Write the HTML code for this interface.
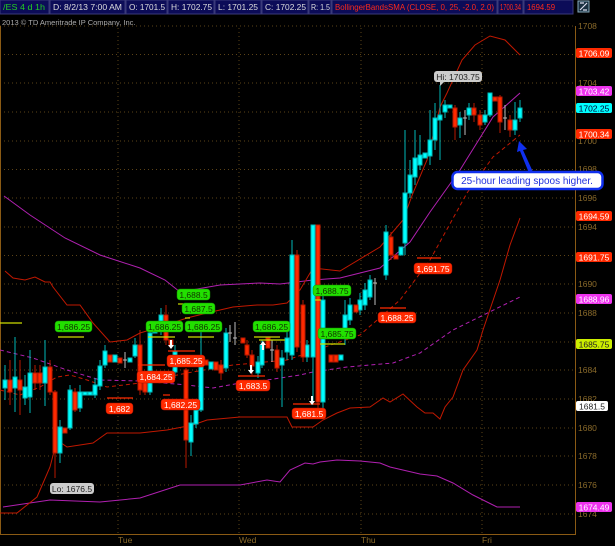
<!DOCTYPE html>
<html><head><meta charset="utf-8"><style>
html,body{margin:0;padding:0;background:#000;width:615px;height:546px;overflow:hidden}
svg{display:block;font-family:"Liberation Sans",sans-serif}
</style></head><body>
<svg width="615" height="546" viewBox="0 0 615 546">
<rect width="615" height="546" fill="#000"/>
<!-- header -->
<g font-size="8">
<rect x="0" y="0" width="49" height="14" fill="#0c0c58" stroke="#3a3a7a"/>
<text x="3" y="10" fill="#22cc22" textLength="42" lengthAdjust="spacingAndGlyphs">/ES 4 d 1h</text>
<rect x="50" y="0" width="75" height="14" fill="#0c0c58" stroke="#3a3a7a"/>
<text x="53" y="10" fill="#ddd" textLength="69" lengthAdjust="spacingAndGlyphs">D: 8/2/13 7:00 AM</text>
<rect x="126" y="0" width="41" height="14" fill="#0c0c58" stroke="#3a3a7a"/>
<text x="129" y="10" fill="#ddd" textLength="36" lengthAdjust="spacingAndGlyphs">O: 1701.5</text>
<rect x="168" y="0" width="46" height="14" fill="#0c0c58" stroke="#3a3a7a"/>
<text x="171" y="10" fill="#ddd" textLength="41" lengthAdjust="spacingAndGlyphs">H: 1702.75</text>
<rect x="215" y="0" width="46" height="14" fill="#0c0c58" stroke="#3a3a7a"/>
<text x="218" y="10" fill="#ddd" textLength="40" lengthAdjust="spacingAndGlyphs">L: 1701.25</text>
<rect x="262" y="0" width="46" height="14" fill="#0c0c58" stroke="#3a3a7a"/>
<text x="265" y="10" fill="#ddd" textLength="41" lengthAdjust="spacingAndGlyphs">C: 1702.25</text>
<rect x="309" y="0" width="22" height="14" fill="#0c0c58" stroke="#3a3a7a"/>
<text x="311" y="10" fill="#ddd" textLength="19" lengthAdjust="spacingAndGlyphs">R: 1.5</text>
<rect x="332" y="0" width="165" height="14" fill="#0c0c58" stroke="#3a3a7a"/>
<text x="335" y="10" fill="#ff2a1a" textLength="159" lengthAdjust="spacingAndGlyphs">BollingerBandsSMA (CLOSE, 0, 25, -2.0, 2.0)</text>
<rect x="498" y="0" width="25" height="14" fill="#0c0c58" stroke="#3a3a7a"/>
<text x="500" y="10" fill="#ff2a1a" textLength="21" lengthAdjust="spacingAndGlyphs">1700.34</text>
<rect x="524" y="0" width="49" height="14" fill="#0c0c58" stroke="#3a3a7a"/>
<text x="527" y="10" fill="#ff2a1a" textLength="28" lengthAdjust="spacingAndGlyphs">1694.59</text>
<rect x="578" y="1" width="11" height="11" fill="#1a3040" stroke="#8ab"/>
<path d="M580 10 L587 3 M580 3 H584 M583 10 H587" stroke="#dde" stroke-width="1.2" fill="none"/>
<text x="2" y="25" fill="#aaa" font-size="7.5">2013 © TD Ameritrade IP Company, Inc.</text>
</g>
<!-- grid -->
<g stroke="#5c4317" stroke-width="1" stroke-dasharray="1,3">
<line x1="0" y1="26" x2="575" y2="26"/><line x1="0" y1="83" x2="575" y2="83"/><line x1="0" y1="141" x2="575" y2="141"/>
<line x1="0" y1="169.5" x2="575" y2="169.5"/><line x1="0" y1="198" x2="575" y2="198"/><line x1="0" y1="227" x2="575" y2="227"/>
<line x1="0" y1="255.5" x2="575" y2="255.5"/><line x1="0" y1="284" x2="575" y2="284"/><line x1="0" y1="313" x2="575" y2="313"/>
<line x1="0" y1="342" x2="575" y2="342"/><line x1="0" y1="370" x2="575" y2="370"/><line x1="0" y1="399" x2="575" y2="399"/>
<line x1="0" y1="428" x2="575" y2="428"/><line x1="0" y1="456" x2="575" y2="456"/><line x1="0" y1="485" x2="575" y2="485"/>
<line x1="0" y1="514" x2="575" y2="514"/><line x1="0" y1="54.5" x2="575" y2="54.5"/><line x1="0" y1="112" x2="575" y2="112"/>
<line x1="118" y1="28" x2="118" y2="534"/><line x1="239" y1="28" x2="239" y2="534"/><line x1="361" y1="28" x2="361" y2="534"/><line x1="482" y1="28" x2="482" y2="534"/>
</g>
<!-- axes -->
<g stroke="#8a5a14" stroke-width="1" fill="none">
<line x1="575.5" y1="26" x2="575.5" y2="534"/>
<line x1="0" y1="534.5" x2="576" y2="534.5"/>
<line x1="0.5" y1="26" x2="0.5" y2="534"/>
</g>
<g font-size="8.5" fill="#8a6a2a">
<text x="578" y="29">1708</text><text x="578" y="86">1704</text><text x="578" y="144">1700</text><text x="578" y="172">1698</text>
<text x="578" y="201">1696</text><text x="578" y="230">1694</text><text x="578" y="258">1692</text><text x="578" y="287">1690</text>
<text x="578" y="316">1688</text><text x="578" y="345">1686</text><text x="578" y="373">1684</text><text x="578" y="402">1682</text>
<text x="578" y="431">1680</text><text x="578" y="459">1678</text><text x="578" y="488">1676</text><text x="578" y="517">1674</text>
<text x="118" y="543">Tue</text><text x="239" y="543">Wed</text><text x="361" y="543">Thu</text><text x="482" y="543">Fri</text>
</g>
<!-- bands -->
<g fill="none" stroke-width="1">
<polyline stroke="#b020b0" points="4,196 30,215 65,238 100,255 140,268 165,280 180,292 220,285 260,283 280,284 313,280 340,278 380,268 410,242 430,212 460,170 493,117 520,93"/>
<polyline stroke="#b020b0" points="3,507 50,500 100,502 140,498 180,485 240,485 267,480 280,482 290,470 305,463 313,464 320,462 337,460 360,461 380,463 390,467 420,474 437,476 453,483 473,495 497,507 520,507"/>
<polyline stroke="#b020b0" stroke-dasharray="4,3" points="0,350 33,358 67,370 100,380 140,381 187,385 213,388 240,383 267,380 300,375 313,372 347,367 393,363 420,353 453,330 520,297"/>
<polyline stroke="#c01800" points="5,271 13,278 25,280 35,277 45,282 50,282 53,287 67,305 80,305 93,323 110,342 127,340 140,333 160,327 187,318 207,313 233,307 257,305 273,305 287,303 300,290 313,268 340,271 380,247 403,220 413,193 427,160 440,107 447,93 462,60 475,45 490,36 505,40 520,55"/>
<polyline stroke="#c01800" points="0,513 17,513 37,497 50,467 57,440 67,447 93,443 107,433 140,433 167,430 193,425 207,420 240,417 287,417 292,427 313,427 323,420 337,413 350,408 370,407 383,398 390,402 403,394 417,407 425,413 433,413 440,419 445,407 453,397 463,370 477,350 483,330 500,280 510,245 520,218"/>
<polyline stroke="#c01800" stroke-dasharray="4,3" points="0,390 20,395 40,387 57,377 70,375 87,380 107,387 140,383 187,373 233,365 287,360 360,335 400,300 430,260 467,193 493,157 520,135"/>
</g>
<!-- candles -->
<g stroke-width="1">
<g stroke="#00b8b8" fill="#00ffff">
<line x1="5" y1="365" x2="5" y2="400"/><rect x="3" y="380" width="4" height="8"/>
<line x1="15" y1="337" x2="15" y2="412"/><rect x="13" y="377" width="4" height="11"/>
<line x1="25" y1="375" x2="25" y2="405"/><rect x="23" y="387" width="4" height="11"/>
<line x1="30" y1="350" x2="30" y2="413"/><rect x="28" y="373" width="4" height="24"/>
<line x1="45" y1="340" x2="45" y2="406"/><rect x="43" y="367" width="4" height="16"/>
<line x1="60" y1="420" x2="60" y2="463"/><rect x="58" y="427" width="4" height="26"/>
<line x1="70" y1="385" x2="70" y2="430"/><rect x="68" y="390" width="4" height="38"/>
<line x1="80" y1="385" x2="80" y2="412"/><rect x="78" y="392" width="4" height="16"/>
<rect x="83" y="392" width="4" height="3"/><rect x="88" y="392" width="4" height="3"/>
<line x1="95" y1="378" x2="95" y2="398"/><rect x="93" y="385" width="4" height="10"/>
<line x1="100" y1="360" x2="100" y2="390"/><rect x="98" y="366" width="4" height="20"/>
<line x1="105" y1="345" x2="105" y2="368"/><rect x="103" y="351" width="4" height="14"/>
<rect x="113" y="355" width="4" height="7"/>
<rect x="128" y="358" width="4" height="4"/>
<line x1="135" y1="338" x2="135" y2="358"/><rect x="133" y="345" width="4" height="11"/>
<line x1="150" y1="328" x2="150" y2="395"/><rect x="148" y="333" width="4" height="59"/>
<rect x="153" y="325" width="4" height="8"/>
<line x1="161" y1="308" x2="161" y2="335"/><rect x="159" y="315" width="4" height="16"/>
<line x1="175" y1="345" x2="175" y2="378"/><rect x="173" y="352" width="4" height="20"/>
<line x1="191" y1="415" x2="191" y2="456"/><rect x="189" y="423" width="4" height="19"/>
<line x1="196" y1="405" x2="196" y2="428"/><rect x="194" y="410" width="4" height="14"/>
<line x1="201" y1="325" x2="201" y2="412"/><rect x="199" y="363" width="4" height="47"/>
<rect x="209" y="362" width="4" height="7"/>
<line x1="226" y1="328" x2="226" y2="372"/><rect x="224" y="333" width="4" height="35"/>
<line x1="258" y1="356" x2="258" y2="378"/><rect x="256" y="362" width="4" height="11"/>
<line x1="262" y1="340" x2="262" y2="368"/><rect x="260" y="345" width="4" height="20"/>
<line x1="282" y1="350" x2="282" y2="407"/><rect x="280" y="358" width="4" height="7"/>
<line x1="287" y1="330" x2="287" y2="360"/><rect x="285" y="338" width="4" height="14"/>
<line x1="292" y1="240" x2="292" y2="360"/><rect x="290" y="255" width="4" height="100"/>
<line x1="307" y1="340" x2="307" y2="362"/><rect x="305" y="345" width="4" height="12"/>
<line x1="313" y1="225" x2="313" y2="405"/><rect x="311" y="225" width="4" height="132"/>
<line x1="323" y1="290" x2="323" y2="410"/><rect x="321" y="300" width="4" height="102"/>
<rect x="339" y="355" width="4" height="5"/>
<line x1="345" y1="300" x2="345" y2="345"/><rect x="343" y="315" width="4" height="23"/>
<line x1="350" y1="298" x2="350" y2="325"/><rect x="348" y="305" width="4" height="15"/>
<line x1="360" y1="293" x2="360" y2="315"/><rect x="358" y="300" width="4" height="10"/>
<line x1="365" y1="283" x2="365" y2="310"/><rect x="363" y="290" width="4" height="15"/>
<line x1="370" y1="275" x2="370" y2="300"/><rect x="368" y="280" width="4" height="17"/>
<line x1="386" y1="225" x2="386" y2="280"/><rect x="384" y="232" width="4" height="43"/>
<rect x="399" y="247" width="4" height="8"/>
<line x1="405" y1="130" x2="405" y2="255"/><rect x="403" y="193" width="4" height="50"/>
<line x1="410" y1="160" x2="410" y2="198"/><rect x="408" y="175" width="4" height="18"/>
<line x1="415" y1="130" x2="415" y2="185"/><rect x="413" y="158" width="4" height="19"/>
<line x1="420" y1="135" x2="420" y2="170"/><rect x="418" y="155" width="4" height="10"/>
<rect x="423" y="153" width="4" height="5"/>
<line x1="430" y1="110" x2="430" y2="165"/><rect x="428" y="140" width="4" height="16"/>
<line x1="435" y1="103" x2="435" y2="150"/><rect x="433" y="118" width="4" height="22"/>
<line x1="440" y1="85" x2="440" y2="160"/><rect x="438" y="115" width="4" height="5"/>
<line x1="445" y1="100" x2="445" y2="118"/><rect x="443" y="105" width="4" height="7"/>
<rect x="448" y="105" width="4" height="3"/>
<line x1="460" y1="112" x2="460" y2="138"/><rect x="458" y="118" width="4" height="7"/>
<line x1="469" y1="103" x2="469" y2="120"/><rect x="467" y="108" width="4" height="7"/>
<line x1="485" y1="110" x2="485" y2="125"/><rect x="483" y="115" width="4" height="7"/>
<line x1="490" y1="93" x2="490" y2="117"/><rect x="488" y="93" width="4" height="22"/>
<line x1="515" y1="102" x2="515" y2="135"/><rect x="513" y="120" width="4" height="10"/>
<line x1="520" y1="100" x2="520" y2="122"/><rect x="518" y="108" width="4" height="10"/>
</g>
<g stroke="#b81800" fill="#ff2a00">
<line x1="10" y1="360" x2="10" y2="405"/><rect x="8" y="380" width="4" height="12"/>
<line x1="20" y1="360" x2="20" y2="415"/><rect x="18" y="380" width="4" height="10"/>
<line x1="35" y1="365" x2="35" y2="390"/><rect x="33" y="373" width="4" height="10"/>
<line x1="40" y1="365" x2="40" y2="390"/><rect x="38" y="373" width="4" height="10"/>
<line x1="50" y1="360" x2="50" y2="395"/><rect x="48" y="367" width="4" height="25"/>
<line x1="55" y1="390" x2="55" y2="478"/><rect x="53" y="392" width="4" height="61"/>
<rect x="63" y="428" width="4" height="5"/>
<line x1="75" y1="388" x2="75" y2="412"/><rect x="73" y="392" width="4" height="18"/>
<rect x="108" y="355" width="4" height="7"/>
<rect x="118" y="358" width="4" height="5"/>
<line x1="140" y1="330" x2="140" y2="395"/><rect x="138" y="345" width="4" height="45"/>
<line x1="145" y1="372" x2="145" y2="395"/><rect x="143" y="378" width="4" height="14"/>
<line x1="166" y1="305" x2="166" y2="345"/><rect x="164" y="315" width="4" height="25"/>
<rect x="169" y="340" width="4" height="6"/>
<line x1="186" y1="368" x2="186" y2="468"/><rect x="184" y="370" width="4" height="70"/>
<rect x="204" y="360" width="4" height="5"/>
<rect x="214" y="362" width="4" height="8"/>
<line x1="221" y1="360" x2="221" y2="380"/><rect x="219" y="365" width="4" height="8"/>
<rect x="241" y="338" width="4" height="5"/>
<line x1="247" y1="340" x2="247" y2="358"/><rect x="245" y="345" width="4" height="10"/>
<line x1="252" y1="350" x2="252" y2="375"/><rect x="250" y="355" width="4" height="11"/>
<rect x="266" y="338" width="4" height="10"/>
<line x1="277" y1="345" x2="277" y2="372"/><rect x="275" y="350" width="4" height="18"/>
<line x1="297" y1="250" x2="297" y2="352"/><rect x="295" y="255" width="4" height="92"/>
<line x1="303" y1="300" x2="303" y2="362"/><rect x="301" y="305" width="4" height="52"/>
<line x1="318" y1="225" x2="318" y2="410"/><rect x="316" y="225" width="4" height="177"/>
<rect x="329" y="355" width="4" height="7"/><rect x="334" y="355" width="4" height="7"/>
<rect x="354" y="305" width="4" height="7"/>
<line x1="391" y1="232" x2="391" y2="260"/><rect x="389" y="237" width="4" height="18"/>
<rect x="394" y="255" width="4" height="4"/>
<line x1="455" y1="105" x2="455" y2="140"/><rect x="453" y="108" width="4" height="19"/>
<line x1="474" y1="103" x2="474" y2="122"/><rect x="472" y="108" width="4" height="7"/>
<line x1="480" y1="110" x2="480" y2="130"/><rect x="478" y="115" width="4" height="10"/>
<rect x="493" y="97" width="4" height="4"/>
<line x1="500" y1="95" x2="500" y2="133"/><rect x="498" y="97" width="4" height="25"/>
<line x1="510" y1="115" x2="510" y2="137"/><rect x="508" y="120" width="4" height="10"/>
</g>
<g stroke="#bbb">
<line x1="125" y1="352" x2="125" y2="368"/><line x1="123" y1="360" x2="127" y2="360"/>
<line x1="230" y1="325" x2="230" y2="342"/><line x1="228" y1="333" x2="232" y2="333"/>
<line x1="235" y1="322" x2="235" y2="345"/><line x1="233" y1="338" x2="237" y2="338"/>
<line x1="272" y1="340" x2="272" y2="362"/><line x1="270" y1="350" x2="274" y2="350"/>
<line x1="375" y1="278" x2="375" y2="305"/><line x1="373" y1="283" x2="377" y2="283"/>
<line x1="465" y1="110" x2="465" y2="135"/><line x1="463" y1="118" x2="467" y2="118"/>
<line x1="505" y1="105" x2="505" y2="130"/><line x1="503" y1="118" x2="507" y2="118"/>
</g>
</g>
<!-- level lines -->
<g stroke-width="1.2">
<g stroke="#ccdd00">
<line x1="0" y1="323" x2="22" y2="323"/><line x1="58" y1="337" x2="84" y2="337"/><line x1="148" y1="337" x2="175" y2="337"/>
<line x1="188" y1="337" x2="214" y2="337"/><line x1="254" y1="337" x2="280" y2="337"/><line x1="178" y1="304" x2="185" y2="304"/>
<line x1="185" y1="318" x2="190" y2="318"/><line x1="259" y1="340" x2="285" y2="340"/><line x1="315" y1="300" x2="321" y2="300"/><line x1="320" y1="344" x2="345" y2="344"/>
</g>
<g stroke="#ff2a00">
<line x1="107" y1="398" x2="133" y2="398"/><line x1="138" y1="365" x2="165" y2="365"/><line x1="168" y1="351" x2="195" y2="351"/>
<line x1="163" y1="395" x2="170" y2="395"/><line x1="238" y1="376" x2="265" y2="376"/><line x1="293" y1="404" x2="320" y2="404"/>
<line x1="380" y1="308" x2="406" y2="308"/><line x1="417" y1="258" x2="441" y2="258"/>
</g>
</g>
<!-- arrows -->
<g fill="#fff">
<path d="M170 340 h2 v5 h2 l-3 4 l-3 -4 h2z"/>
<path d="M250 365 h2 v5 h2 l-3 4 l-3 -4 h2z"/>
<path d="M311 396 h2 v5 h2 l-3 4 l-3 -4 h2z"/>
<path d="M262 350 h2 v-5 h2 l-3 -4 l-3 4 h2z"/>
</g>
<!-- labels -->
<g font-size="8.5" text-anchor="middle">
<g fill="#22e000" stroke="#118800" stroke-width="0.5">
<rect x="177" y="289" width="33" height="11" rx="3"/><rect x="182" y="303" width="33" height="11" rx="3"/>
<rect x="55" y="321" width="37" height="11" rx="3"/><rect x="146" y="321" width="37" height="11" rx="3"/>
<rect x="185" y="321" width="37" height="11" rx="3"/><rect x="253" y="321" width="37" height="11" rx="3"/>
<rect x="313" y="285" width="38" height="11" rx="3"/><rect x="318" y="328" width="38" height="11" rx="3"/>
</g>
<g fill="#113300">
<text x="193.5" y="298">1,688.5</text><text x="198.5" y="312">1,687.5</text>
<text x="73.5" y="330">1,686.25</text><text x="164.5" y="330">1,686.25</text><text x="203.5" y="330">1,686.25</text><text x="271.5" y="330">1,686.25</text>
<text x="332" y="294">1,688.75</text><text x="337" y="337">1,685.75</text>
</g>
<g fill="#ff2a00" stroke="#aa1000" stroke-width="0.5">
<rect x="137" y="371" width="38" height="12" rx="3"/><rect x="167" y="355" width="38" height="12" rx="3"/>
<rect x="106" y="403" width="27" height="11" rx="3"/><rect x="161" y="399" width="39" height="11" rx="3"/>
<rect x="236" y="380" width="34" height="11" rx="3"/><rect x="292" y="408" width="34" height="11" rx="3"/>
<rect x="378" y="312" width="38" height="11" rx="3"/><rect x="414" y="263" width="38" height="11" rx="3"/>
</g>
<g fill="#fff">
<text x="156" y="380">1,684.25</text><text x="186" y="364">1,685.25</text><text x="119.5" y="412">1,682</text>
<text x="180.5" y="408">1,682.25</text><text x="253" y="389">1,683.5</text><text x="309" y="417">1,681.5</text>
<text x="397" y="321">1,688.25</text><text x="433" y="272">1,691.75</text>
</g>
<rect x="434" y="71" width="48" height="11" rx="3" fill="#ccc"/>
<path d="M440 82 l0 4 l4 -4z" fill="#ccc"/>
<text x="458" y="80" fill="#222">Hi: 1703.75</text>
<rect x="50" y="483" width="44" height="11" rx="3" fill="#ccc"/>
<text x="72" y="492" fill="#222">Lo: 1676.5</text>
</g>
<!-- right axis value labels -->
<g font-size="8.5" text-anchor="middle">
<rect x="576" y="48" width="36" height="10" rx="2" fill="#ff2a00"/><text x="594" y="56.5" fill="#fff">1706.09</text>
<rect x="576" y="86" width="36" height="10" rx="2" fill="#ee33ee"/><text x="594" y="94.5" fill="#fff">1703.42</text>
<rect x="576" y="103" width="36" height="10" rx="2" fill="#00ffff"/><text x="594" y="111.5" fill="#003">1702.25</text>
<rect x="576" y="129" width="36" height="10" rx="2" fill="#ff2a00"/><text x="594" y="137.5" fill="#fff">1700.34</text>
<rect x="576" y="211" width="36" height="10" rx="2" fill="#ff2a00"/><text x="594" y="219.5" fill="#fff">1694.59</text>
<rect x="576" y="252" width="36" height="10" rx="2" fill="#ff2a00"/><text x="594" y="260.5" fill="#fff">1691.75</text>
<rect x="576" y="294" width="36" height="10" rx="2" fill="#ee33ee"/><text x="594" y="302.5" fill="#fff">1688.96</text>
<rect x="576" y="339" width="36" height="10" rx="2" fill="#ccee00"/><text x="594" y="347.5" fill="#222">1685.75</text>
<rect x="576" y="401" width="32" height="10" rx="2" fill="#fff"/><text x="592" y="409.5" fill="#222">1681.5</text>
<rect x="576" y="502" width="36" height="10" rx="2" fill="#ee33ee"/><text x="594" y="510.5" fill="#fff">1674.49</text>
</g>
<!-- callout -->
<path d="M533 172 L523 150 L527 149 L519 141 L517 152 L520 151 L529 173z" fill="#1030ee"/>
<rect x="452.5" y="172" width="150" height="17" rx="5" fill="#fff" stroke="#1030ee" stroke-width="2.5"/>
<text x="527" y="184" font-size="10" fill="#2030dd" text-anchor="middle">25-hour leading spoos higher.</text>
</svg>
</body></html>
